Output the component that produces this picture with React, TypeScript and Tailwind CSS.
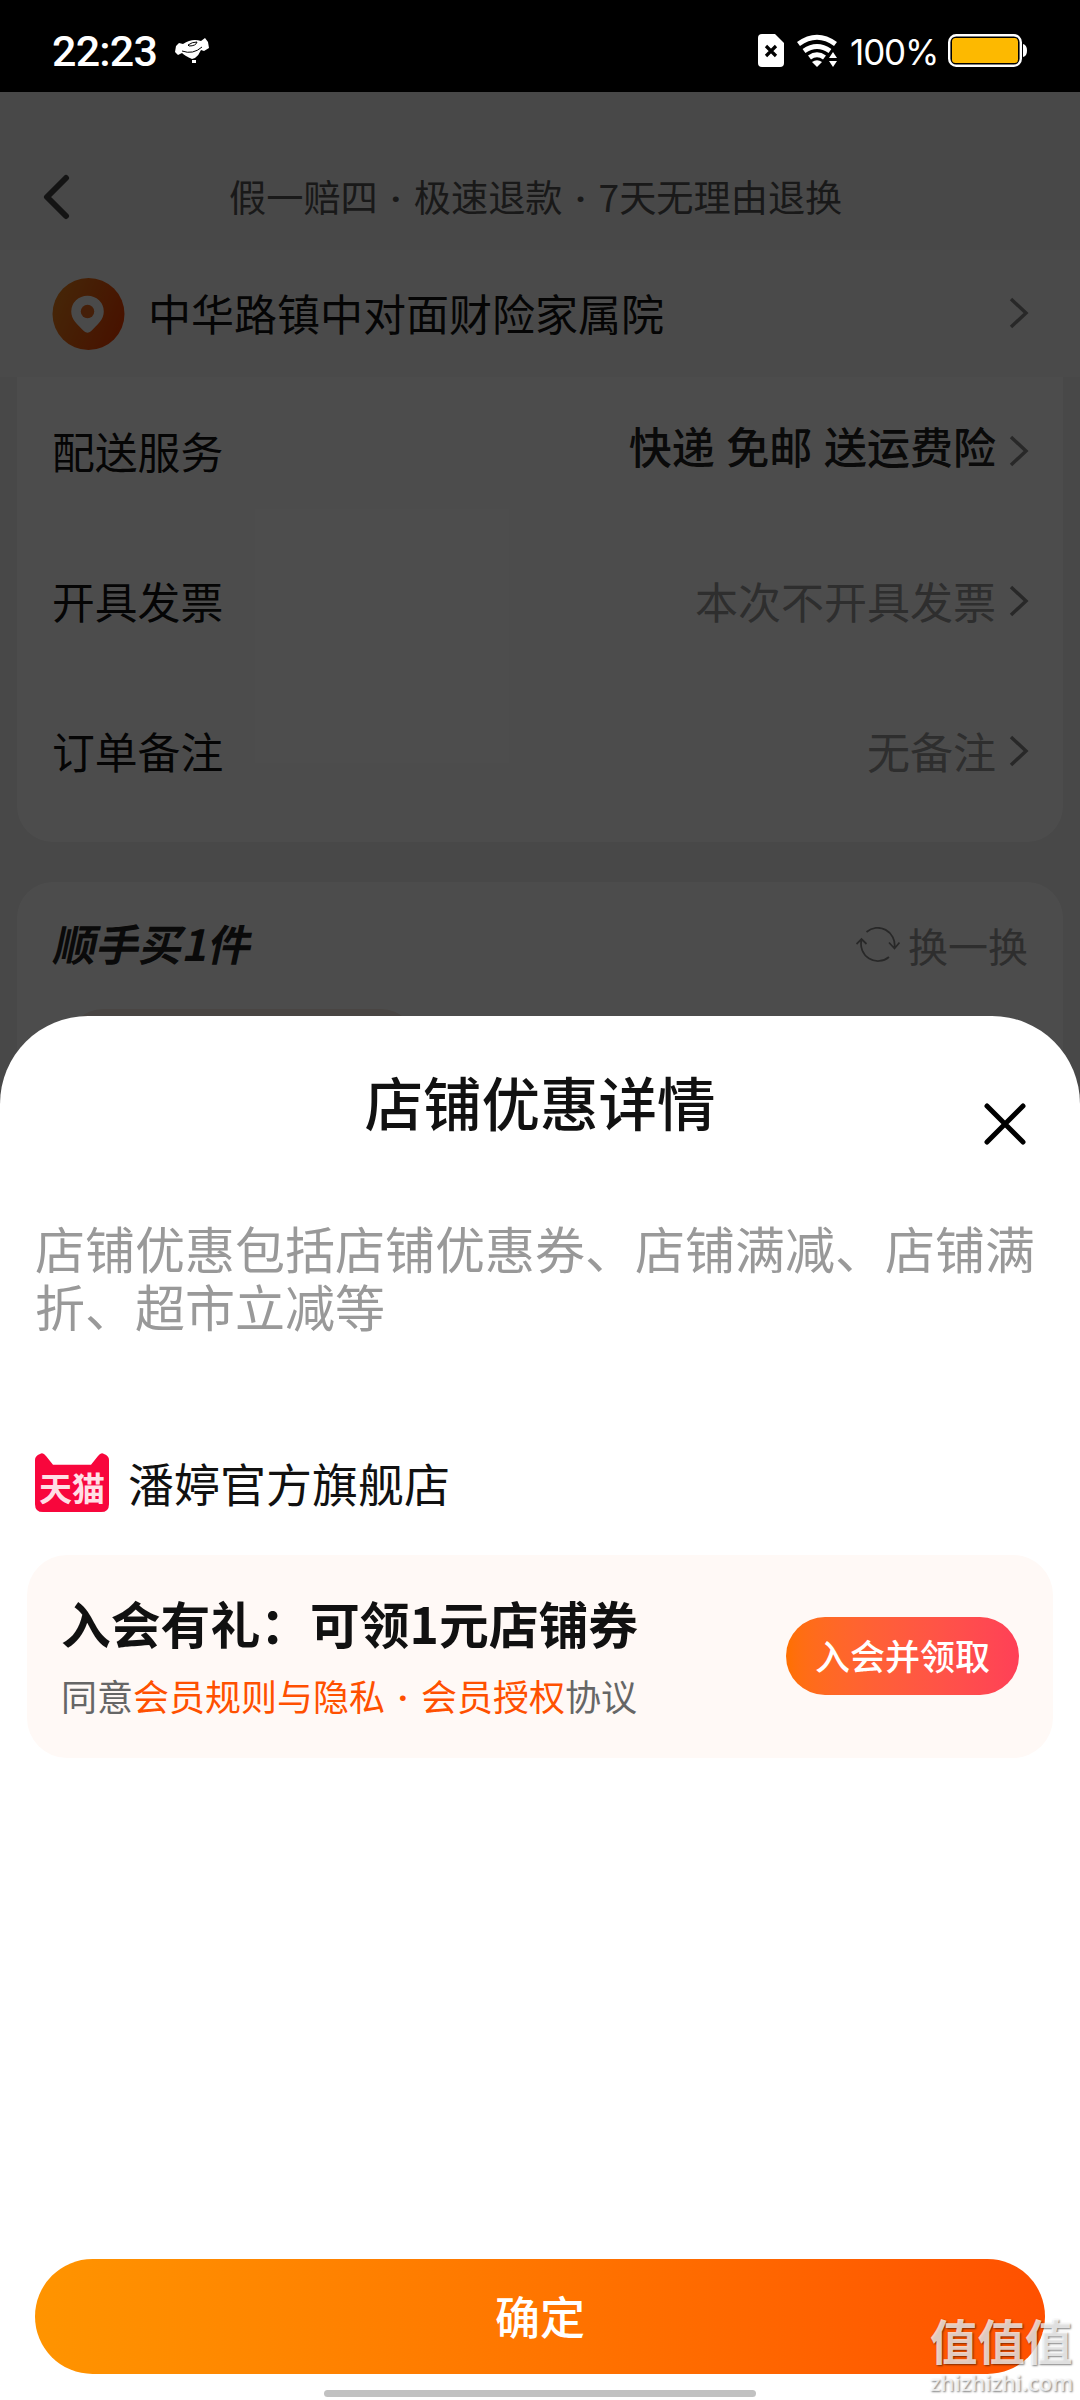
import clsx from 'clsx';

const Chevron = ({ className }: { className?: string }) => (
  <svg viewBox="0 0 20 32" className={clsx('h-8 w-5 shrink-0', className)} fill="none">
    <path d="M2 2 L17 16 L2 30" stroke="#888" strokeWidth="3.5" />
  </svg>
);

// Middle dot in a fixed slot, the CJK glyph is too wide here
const Dot = () => <span className="inline-block w-9 text-center font-[Roboto] font-bold">·</span>;

const rows = [
  { label: '配送服务', value: '快递 免邮 送运费险', strong: true },
  { label: '开具发票', value: '本次不开具发票' },
  { label: '订单备注', value: '无备注' },
];

const StatusBar = () => (
  <div className="flex h-[92px] items-center bg-black pr-[53px] pl-[52px] text-white">
    <span className="w-[107px] pt-2.5 font-[Roboto] text-[43px] leading-none font-medium tracking-[-0.8px]">22:23</span>
    <svg viewBox="0 0 34 26" className="mt-2.5 ml-4 h-[26px] w-[34px]" fill="#fff">
      <path d="M1 8 L4 5 L8 6 Q17 0 26 3 L30 0 L33 4 L34 10 L29 13 L26 12 Q24 17 20 20 L17 21 Q10 18 7 15 L3 17 L0 14 Z" />
      <path d="M17 22 h4 v3 h-4 z" />
      <path d="M13 7 Q17 4 22 4 Q21 8 14 8 Z M7 13 Q18 17 27 9" fill="none" stroke="#000" strokeWidth="1" />
    </svg>
    <div className="ml-auto flex items-center pt-[9px]">
      <svg viewBox="0 0 26 33" className="h-[33px] w-[26px]">
        <path d="M4 0 H17 L26 9 V29 Q26 33 22 33 H4 Q0 33 0 29 V4 Q0 0 4 0 Z" fill="#fff" />
        <path d="M8 12 L18 22 M18 12 L8 22" stroke="#000" strokeWidth="3.2" />
      </svg>
      <svg viewBox="0 0 40 33" className="ml-[13px] h-[33px] w-10">
        <g fill="none" stroke="#fff" strokeWidth="5">
          <path d="M1.500 10 Q20 -3.500 38.500 10" />
          <path d="M7 17 Q20 8 33 17" />
          <path d="M12.500 23.500 Q20 18 27.500 23.500" />
        </g>
        <path d="M15 28 Q20 24.500 25 28 L20 33 Z" fill="#fff" />
        <path d="M36 13 L43 24 V33 H30 V24 Z" fill="#000" />
        <path d="M36 18 L40 24 H32 Z M32 27 H40 L36 33 Z" fill="#fff" />
      </svg>
      <span className="ml-[13px] w-[88px] pt-1 font-[Inter] text-[35px] leading-none tracking-[-1.100px]">100%</span>
      <svg viewBox="0 0 79 33" className="ml-[10px] h-[33px] w-[79px]">
        <rect x="1.200" y="1.200" width="71.600" height="30.600" rx="7" fill="none" stroke="#fff" strokeWidth="2.400" />
        <rect x="4" y="4" width="66" height="25" rx="3.500" fill="#fdb900" />
        <path d="M75 10 Q79 11 79 16.500 Q79 22 75 23 Z" fill="#fff" />
      </svg>
    </div>
  </div>
);

const OrderPage = () => (
  <div className="h-[2308px] bg-[#f0f0f0]">
    {/* Nav */}
    <div className="flex h-[158px] items-center pt-[52px]">
      <svg viewBox="0 0 30 48" className="ml-10 h-12 w-[30px]" fill="none">
        <path d="M26 5 L7 24 L26 43" stroke="#444" strokeWidth="6" strokeLinecap="round" strokeLinejoin="round" />
      </svg>
      <p className="mt-[3px] ml-[159px] text-[37.200px] leading-none text-[#555]">
        假一赔四<Dot />极速退款<Dot />7天无理由退换
      </p>
    </div>

    {/* Address */}
    <div className="flex h-[127px] items-center bg-[#f8f8f8] pr-[51px] pl-[52px]">
      <svg viewBox="0 0 74 74" className="h-[74px] w-[73px]">
        <defs>
          <linearGradient id="pin" x1="0" y1="0.300" x2="1" y2="0.700">
            <stop offset="0" stopColor="#e8801c" />
            <stop offset="1" stopColor="#f03c00" />
          </linearGradient>
        </defs>
        <circle cx="37" cy="37" r="36.500" fill="url(#pin)" />
        <path d="M36 18.500 a16.500 16 0 0 1 16.500 16 c0 8 -6 13 -13 20 q-3.500 3 -7 0 c-7 -7 -13 -12 -13 -20 a16.500 16 0 0 1 16.500 -16 z" fill="#f8f8f8" />
        <circle cx="36" cy="34.500" r="6.800" fill="#e8681e" />
      </svg>
      <span className="mb-[2px] ml-[23px] text-[43px] leading-none text-[#111]">中华路镇中对面财险家属院</span>
      <Chevron className="mb-0.5 ml-auto" />
    </div>

    {/* Order options */}
    <div className="mx-[17px] h-[465px] rounded-b-[36px] bg-white pr-[34px] pl-[35px]">
      {rows.map((row) => (
        <div key={row.label} className="flex h-[150px] items-center">
          <span className="mb-[3px] text-[42.800px] leading-none text-[#111]">{row.label}</span>
          <span
            className={clsx(
              'mr-[13px] ml-auto text-[43px] leading-none',
              row.strong ? 'mb-[14px] font-medium text-[#222] [word-spacing:2px]' : 'mb-[3px] text-[#999]',
            )}
          >
            {row.value}
          </span>
          <Chevron className="mb-0.5" />
        </div>
      ))}
    </div>

    {/* Add-on purchase */}
    <div className="mx-[17px] mt-10 h-[300px] rounded-t-[36px] bg-white pt-[40px] pr-[34px] pl-[39px]">
      <div className="flex h-[46px] items-center">
        <span className="mb-[6px] -skew-x-12 text-[43px] leading-none font-bold text-[#222]">顺手买1件</span>
        <svg viewBox="0 0 44 36" className="mr-[8px] mb-px ml-auto h-9 w-11" fill="none" stroke="#888" strokeWidth="1.800">
          <path d="M10.500 5 A17 17 0 0 1 38.500 20 M33 15.500 L38.500 21.500 L43.500 15.500" />
          <path d="M33 30 A17 17 0 0 1 5.500 13 M0.500 17 L5.500 12 L10.500 17" />
        </svg>
        <span className="mr-px text-[40px] leading-none text-[#999]">换一换</span>
      </div>
      <div className="mt-[41px] ml-[11px] h-40 w-[350px] rounded-[36px] bg-[#f3e8df]" />
    </div>
  </div>
);

const TmallLogo = () => (
  <div className="relative h-[60px] w-[74px]">
    <svg viewBox="0 0 74 60" className="h-[59px] w-full" preserveAspectRatio="none">
      <path d="M5 1 Q8 -1 11 3 L18 12 H56 L63 3 Q66 -1 69 1 Q74 3 74 7 V52 Q74 60 66 60 H8 Q0 60 0 52 V7 Q0 3 5 1 Z" fill="#f8063c" />
    </svg>
    <span className="absolute top-[18px] left-[4px] text-[33px] leading-none font-bold text-[#ffdfe5]">天猫</span>
  </div>
);

const DiscountSheet = () => (
  <div className="absolute inset-x-0 top-[1016px] flex h-[1384px] flex-col rounded-t-[88px] bg-white">
    <div className="relative pt-[55px] text-center">
      <h2 className="text-[58.500px] leading-[60px] font-medium text-[#111]">店铺优惠详情</h2>
      <svg viewBox="0 0 42 42" className="absolute top-[87px] right-[54px] h-[42px] w-[42px]" stroke="#000" strokeWidth="5" strokeLinecap="round">
        <path d="M3 3 L39 39 M39 3 L3 39" />
      </svg>
    </div>

    <p className="mt-[87px] ml-[35px] w-[1010px] text-[50px] leading-[58px] text-[#999]">
      店铺优惠包括店铺优惠券、店铺满减、店铺满折、超市立减等
    </p>

    <div className="mt-[119px] ml-[35px] flex h-[60px] items-center">
      <TmallLogo />
      <span className="mb-[3px] ml-[19px] text-[46px] leading-none text-[#111]">潘婷官方旗舰店</span>
    </div>

    {/* Member coupon */}
    <div className="mx-[27px] mt-[42px] flex h-[203px] items-center justify-between rounded-[40px] bg-[#fff9f6] pr-[34px] pl-[34px]">
      <div>
        <h3 className="text-[49.800px] leading-[56px] font-bold text-[#111]">入会有礼：可领1元店铺券</h3>
        <p className="mt-[25px] text-[36px] leading-[40px] text-[#666]">
          同意
          <span className="text-[#ff5000]">
            会员规则与隐私<Dot />会员授权
          </span>
          协议
        </p>
      </div>
      <button className="mb-px h-[78px] w-[233px] rounded-full bg-linear-to-r from-[#ff7000] to-[#ff4057] pb-[3px] text-[35px] leading-none font-medium text-white">
        入会并领取
      </button>
    </div>

    <button className="mx-[35px] mt-auto h-[115px] rounded-full bg-linear-to-r from-[#ff9400] to-[#ff5000] pb-0.5 text-[45px] leading-none font-medium text-white">
      确定
    </button>
    <div className="mx-auto mt-4 mb-[3px] h-[7px] w-[432px] rounded-full bg-[#c1c1c1]" />
  </div>
);

const Watermark = () => (
  <div className="absolute right-[8px] bottom-[5px] w-[142px] text-white/75 [text-shadow:1px_1px_2px_rgba(0,0,0,0.500)]">
    <div className="mb-[4px] text-[47.500px] leading-[50px] font-bold whitespace-nowrap">值值值</div>
    <div className="font-['Open_Sans'] text-[22px] leading-[26px] font-semibold whitespace-nowrap">zhizhizhi.com</div>
  </div>
);

const App = () => {
  return (
    <div className="relative h-[2400px] w-[1080px] overflow-hidden font-['Noto_Sans_CJK_SC',sans-serif]">
      <StatusBar />
      <OrderPage />
      <div className="absolute inset-x-0 top-[92px] bottom-0 bg-black/70" />
      <DiscountSheet />
      <Watermark />
    </div>
  );
};

export default App;
